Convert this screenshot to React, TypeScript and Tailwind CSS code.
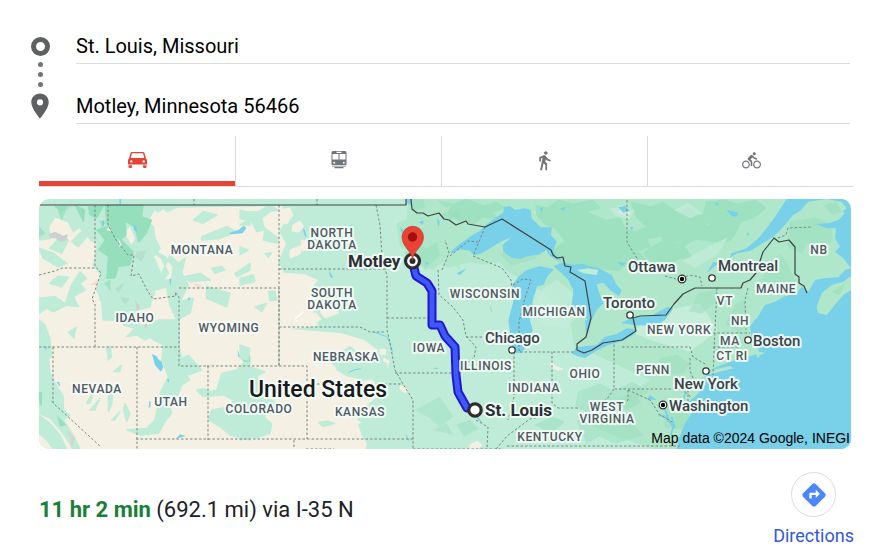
import type { ReactNode } from "react";
import { MdDirections, MdDirectionsBike, MdDirectionsWalk, MdLocationOn } from "react-icons/md";

function Region({ x, y, children }: { x: number; y: number; children: ReactNode }) {
  return (
    <g transform={`translate(${x} ${y}) scale(0.33333)`} strokeLinejoin="round">
      {children}
    </g>
  );
}

const stateLabels: [string, number, number][] = [
  ["MONTANA", 202, 254],
  ["NORTH DAKOTA", 332, 237],
  ["SOUTH DAKOTA", 332, 297],
  ["IDAHO", 135, 322],
  ["WYOMING", 229, 332],
  ["NEBRASKA", 346, 361],
  ["NEVADA", 97, 393],
  ["UTAH", 171, 406],
  ["COLORADO", 259, 413],
  ["KANSAS", 360, 416],
  ["IOWA", 429, 352],
  ["WISCONSIN", 485, 298],
  ["MICHIGAN", 554, 316],
  ["ILLINOIS", 486, 370],
  ["INDIANA", 534, 392],
  ["OHIO", 585, 378],
  ["WEST VIRGINIA", 607, 411],
  ["KENTUCKY", 550, 441],
  ["NEW YORK", 679, 334],
  ["PENN", 653, 374],
  ["VT", 725, 305],
  ["NH", 740, 325],
  ["MAINE", 776, 293],
  ["MA", 730, 345],
  ["CT RI", 732, 360],
  ["NB", 819, 254],
];

const wrappedStates = ["NORTH DAKOTA", "SOUTH DAKOTA", "WEST VIRGINIA"];

const cityLabels: [string, number, number][] = [
  ["Ottawa", 628, 272],
  ["Montreal", 718, 271],
  ["Toronto", 603, 308],
  ["Chicago", 485, 343],
  ["Boston", 753, 346],
  ["New York", 674, 389],
  ["Washington", 669, 411],
];

const GREEN = "#bfecd8";
const EAST = "#b0e7cb";
const DARK = "#96dfbd";
const SAND = "#f5f0e4";
const WATER = "#78d1e9";

function RouteMap() {
  return (
    <svg
      viewBox="39 199 812 250"
      className="mr-[3px] block h-auto rounded-[10px] font-['Roboto',sans-serif]"
      role="img"
      aria-label="Route from St. Louis to Motley"
    >
      <rect x="39" y="199" width="812" height="250" fill={GREEN} />

      {/* Eastern forests and Canada */}
      <path fill={EAST} d="M408 199H851V449H655L620 438 590 425 560 405 550 380 575 350 570 320 540 290 505 270 470 262 448 268 430 255 405 240Z" />
      <path fill={GREEN} d="M455 270L500 262 520 290 500 320 515 345 590 352 650 380 610 408 570 420 520 410 450 380Z" />
      <path fill="#c5edda" d="M652 314L700 303 718 330 690 352 650 340 632 332Z" />

      {/* Western plains */}
      <path
        fill={SAND}
        d="M39 205H60L58 216 76 222 84 236 97 240 94 262 105 280 99 300 112 312 126 299 137 303 150 292 166 288 160 270 154 256 144 245 155 240 149 220 156 208 282 206 288 218 279 231 286 244 278 262 284 273 304 274 318 280 310 290 322 300 312 314 318 326 290 329 340 333 364 340 378 350 371 360 351 351 338 361 336 370 348 377 372 380 385 390 366 406 375 418 358 424 362 436 371 449H39Z"
      />
      <g fill={SAND} stroke={SAND} strokeWidth="1" strokeLinejoin="round">
        <path d="M280 210l10-2 3 8-6 5-7-3zM293 225l7-4 4 6-5 5-7-1zM290 250l12-5-2 9-10 4zM301 240l6 1 1 9-6 1zM285 216l5 3-3 5-4-2zM304 315l12-2 5 6-10 7-8-3z" />
        <path d="M320 311l14-3 5 5-14 5zM380 349l6 1-1 5-5-1zM384 358l5 3-2 7-4-2zM401 385l7 5-3 3-5-4zM371 417l9 1-2 6-7-2zM386 417l4 3-3 4zM551 361l4 5 8 3-6 1-6-3zM470 445l7-4 5 4-3 3-9 1zM618 212l6-4 6 5-3 3z" />
      </g>

      {/* Rocky Mountains, Montana and Idaho */}
      <Region x={30} y={190}>
        <g fill={GREEN} stroke={GREEN} strokeWidth="5">
          <path d="M27 50H180L180 70 140 90 150 110 130 125 115 95 75 80 55 110 60 145 27 150Z" />
          <path d="M160 50H350L345 90 370 110 375 145 390 175 365 205 345 215 350 250 375 310 355 330 360 350 320 360 310 390H220L215 330 200 300 215 255 190 225 210 160 180 150 165 110Z" />
          <path d="M27 175L70 190 110 220 85 230 40 205ZM60 175L90 140 115 150 95 190ZM125 155L160 120 170 140 145 170ZM27 325L75 320 110 345 70 365 50 355 27 370ZM105 345L125 285 150 245 170 265 150 280 165 300 130 320 145 350ZM60 280L85 258 115 262 95 290Z" />
          <path d="M365 55L415 45 385 65ZM490 90L520 65 560 75 520 100ZM400 50L450 48 410 65ZM515 140L590 110 620 125 570 145 515 150ZM630 105L660 85V105ZM545 235L575 230 585 240 555 250ZM465 260L510 250 540 270 480 275ZM615 250L660 220V240L620 260Z" />
          <path d="M355 175L395 205 415 250 400 270 425 270 430 230 405 200ZM420 195L445 220 465 205 455 250 475 285 450 335 490 325 480 370 440 390 420 345 410 290 390 265 360 310 380 285ZM530 290L600 310 590 350 530 325ZM330 295L370 315 360 345Z" />
        </g>
        <g fill={DARK} stroke={DARK} strokeWidth="3">
          <path d="M175 50L220 48 200 85 180 75ZM225 45H340L335 80 365 90 350 130 325 158 315 110 285 95 290 135 270 150 255 120 230 100ZM200 120L240 105 275 150 310 185 300 225 265 230 255 265 230 265 235 200 205 180 225 150ZM75 50H110L95 65ZM135 45L165 60 160 95 145 65Z" />
          <path d="M225 280L240 270 240 300ZM85 60L110 50 95 90ZM27 110L45 130 27 140Z" opacity=".7" />
        </g>
        <path fill="#add8c6" opacity=".6" d="M320 185L350 180 335 215 315 200ZM255 295L285 275 265 310ZM270 320L300 325 285 345ZM90 50L130 48 110 60ZM205 90L235 95 215 110Z" />
        <path fill="#ccd0ce" d="M55 133L75 125 100 137 113 132 111 150 90 155 78 145 60 145ZM315 330L330 350 322 365Z" />
        <path fill="#f2ded3" d="M180 285L210 265 200 285ZM490 280L515 285 505 300Z" />
        <path fill={SAND} d="M290 120L300 110 315 145 305 165 290 140ZM235 110L245 125 230 120ZM265 143L275 165 268 170Z" />
        <g fill={WATER}>
          <path d="M215 95L222 90 223 105 217 110ZM310 103L318 108 323 128 312 120ZM268 27L274 28 272 45 268 40ZM595 130L625 120 640 108 648 118 635 130 605 133ZM418 268L424 265 422 290ZM472 325L481 322 478 333Z" />
        </g>
      </Region>

      {/* Sierra Nevada, Utah and Colorado */}
      <Region x={30} y={320}>
        <g fill={GREEN} stroke={GREEN} strokeWidth="4">
          <path d="M27 0L45 15 60 55 65 110 55 115 60 155 75 190 100 230 100 270 120 285 100 300 130 345 150 387H130L95 335 60 295 27 280Z" />
          <path d="M27 285L60 310 90 345 110 387H70L50 360 27 340ZM115 37L138 22 132 55ZM280 0L325 5 365 50 345 60 320 45 290 50 315 25 280 15ZM330 30L385 0H448V80L455 115 475 105 515 150 470 165 480 180 455 195 440 235 420 255 425 280 405 305 385 340 330 345 290 330 350 325 375 300 380 270 400 245 390 220 415 170 395 120 400 75 370 60Z" />
          <path d="M540 215L560 210 575 160 620 150 660 110V360L600 345 570 320 535 300 545 270 600 260 610 240 580 225 520 230 500 210 520 205ZM230 85L240 80 245 110 235 120ZM250 155L275 135 270 155ZM195 205L180 250 170 250ZM235 220L250 210 245 255 235 275ZM285 250L300 280 290 305 280 270ZM245 300L270 275 255 300ZM210 235L195 270 180 270ZM455 150L510 150 480 165Z" />
        </g>
        <path fill={DARK} d="M27 215L37 215 35 260 27 250ZM80 285L110 315 90 320ZM630 110L660 105V125L640 125Z" />
        <path fill="#d6d4cf" d="M110 330L135 355 125 387 120 355ZM338 15L350 8 355 18 345 24Z" />
        <g fill={WATER}>
          <path d="M366 103L378 107 387 120 395 125 400 142 393 155 383 145 375 135ZM80 187L88 185 90 201ZM45 82L52 80 48 92ZM411 178L418 178 415 190ZM358 243L362 245 361 260 356 265ZM438 356L450 343 467 348ZM622 88L628 105 640 115 625 110ZM63 238L68 245 65 250Z" />
        </g>
      </Region>

      {/* Plains rivers and patches */}
      <Region x={240} y={190}>
        <g fill={GREEN} stroke={GREEN} strokeWidth="4">
          <path d="M0 85L35 95 50 125 75 120 65 85 90 65 115 60 90 45 55 65 20 65 0 60ZM75 115L115 145 110 160 70 150ZM0 170L25 180 0 195ZM0 265L40 255 45 275 0 285ZM85 305L105 303 110 330 90 332ZM75 190L95 188 85 202ZM45 350L80 340 65 365Z" />
        </g>
        <path fill={EAST} d="M470 100L510 85 530 27H660V240L620 200 580 240 555 235 540 200 480 170Z" />
        <path fill={DARK} opacity=".55" d="M500 27H550L555 55 520 60ZM490 190L530 160 560 175 590 155 600 195 555 240 530 210ZM600 70L660 60V85L620 90ZM590 30L640 40 620 55Z" />
        <g fill={WATER}>
          <path d="M0 120L12 108 18 112 8 130 0 130ZM188 113L195 120 200 145 193 135ZM325 110L335 103 332 112ZM500 27H515L512 45 500 40ZM535 98L550 90 550 103ZM480 115L492 118 485 130ZM590 85L600 95 595 110ZM555 215L568 218 560 225ZM265 225L270 245 280 265 270 260Z" />
        </g>
        <path stroke="#fff" strokeWidth="5" d="M165 387L190 365" />
      </Region>
      <Region x={240} y={320}>
        <g fill={GREEN} stroke={GREEN} strokeWidth="4">
          <path d="M0 145L25 140 75 155 50 170 70 190 50 205 70 230 105 245 110 270 80 260 75 295 95 310 90 340 45 355 20 320 20 280 0 250ZM0 290L30 300 45 350 0 360ZM235 308L260 303 285 310 250 320ZM355 280L410 270 450 290 440 387H380L385 345 365 345 375 310 355 300ZM265 120L330 80 370 110 440 130 440 165 370 180 310 160ZM0 75L30 85 25 120 0 115Z" />
        </g>
        <path fill={DARK} opacity=".4" d="M525 270L600 230 640 290 600 320 570 295ZM580 330L620 310 640 345Z" />
        <path fill="none" stroke={WATER} strokeWidth="3" d="M325 157L342 150 362 146M400 35L440 50 450 70 457 95M582 145L593 145M498 345L507 362" />
      </Region>

      {/* Woodland texture across Ontario and Quebec */}
      <g fill={DARK} stroke={DARK} strokeWidth="1" strokeLinejoin="round" opacity=".7">
        <path d="M452 205l14-6 18 7 12-4 10 6-15 5 12 7-20-3-9 7-16-4-10-8zM536 205l12 3 10-8 15 4 20-4 8 8-15 4 20 8 14-2 6 12 18 3 6 14-12 4 8 9-17 2-10 9-22-3-20 1-18-5-6-14 12-9-9-12-10-4-9-9z" />
        <path d="M631 202l20 5 12-5 14 10 12-5 10 9 12-2 4 8-12 3 17 8-6 9-18-3-12 7-7-5-10 5-6-10-14 3-9-9 9-3-10-9zM706 202l18-2 14 4 18-4 10 8-12 10-12 3-10 18-14 6-6-10-14 4 4-12 12-3-11-8zM652 247l14-8 18 7 8 11-14 2-12 9-15-6-8-9z" />
        <path d="M758 290l11-28 12-7 6 9 10 22-12 4zM660 359l17-4 12 9-6 9-27 2zM578 392l22-8 15 7 17-9 16 10-22 14-18-4-18 10-14-4zM577 421l24-7 14 13 16-4 12 12-27 8-17-7-12 7zM790 222l22-6 18 8 3 16-10 8-16-5-5 10-14-6zM698 294l15-3 4 10-15 12-12-2zM500 254l20-2 17 6-26 7zM726 324l10-20 8-3 4 22-8 10z" opacity=".65" />
        <path d="M665 405l18 2 8 12-8 10-18-2zM615 399l17-6 9 9-14 8zM535 425l18-8 11 5-12 11zM457 425l13-5 8 9-14 7z" opacity=".7" />
      </g>
      <path fill="#c5edda" opacity=".7" d="M610 209l12-4 13 6-6 8-14-3zM674 210l14-7 14 10-12 5zM682 261l32-17 14-7-10 17-23 14zM543 288l14-8 16 13 3 25-11 10-23-3-6-20z" />

      {/* Great Lakes */}
      <Region x={450} y={190}>
        <g fill={WATER}>
          <path d="M0 187L25 165 60 140 90 122 107 105 130 88 160 68 163 50 180 48 195 60 225 55 242 60 245 85 272 112 305 112 303 135 320 155 310 180 318 200 340 210 322 210 300 198 288 180 265 195 235 198 210 207 185 203 160 185 158 165 182 143 158 152 125 172 95 190 73 196 60 182 30 178 5 190Z" />
          <path d="M187 285L205 260 230 240 270 228 312 238 293 258 280 285 262 288 250 325 245 355 240 390H175L190 335Z" />
          <path d="M310 228L340 218 370 224 395 221 450 236 485 255 500 285 515 300 507 318 480 300 460 278 440 283 448 310 460 340 440 360 425 390 415 390 390 375 365 345 370 300 355 270 335 250Z" />
          <path d="M505 52L525 48 540 62 520 68ZM500 215L530 220 515 228ZM330 55L350 50 340 62ZM270 55L280 52 276 68ZM20 250L50 235 30 255ZM120 345L128 370 122 360ZM540 110L550 112 545 122Z" />
        </g>
        <path fill={GREEN} d="M380 240L415 235 445 240 440 255 400 250ZM250 65L258 62 254 75Z" />
      </Region>
      <Region x={450} y={320}>
        <path fill={WATER} d="M175 0H240L248 30 237 70 215 98 198 99 185 75ZM405 0H425L415 35 408 45ZM365 100L380 82 410 78 440 75 465 50 500 42 530 25 560 28 550 45 520 62 475 75 440 92 405 114 380 108ZM590 238L600 225 620 240ZM50 258L58 265 100 310 90 305Z" />
      </Region>
      <path fill={WATER} d="M621 323L631 318 650 316 668 307 673 309 665 320 655 326 633 325Z" />

      {/* Atlantic, Gulf of St. Lawrence and Nova Scotia */}
      <Region x={650} y={190}>
        <g fill={WATER}>
          <path d="M410 27H603V235L580 205 555 185 570 170 555 145 558 115 530 115 495 102 535 100 565 90 585 70 550 45 500 38 465 55 430 75 400 110 370 140 330 165 300 183 260 190 240 203 245 190 290 175 325 145 350 115 375 80Z" />
          <path d="M603 235L585 240 565 262 520 265 495 270 475 305 455 290 440 310 400 320 375 335 345 345 330 370 318 390H603Z" />
          <path d="M230 60L245 62 265 68 260 80 245 78ZM195 35L205 42 200 48ZM380 100L388 92 385 105ZM190 215L205 220 170 250ZM196 300L200 300 200 340ZM290 130L298 128 292 140Z" />
        </g>
        <path fill={EAST} d="M603 258L580 275 545 285 515 310 500 350 505 370 530 375 550 350 580 315 603 300Z" />
        <path fill={EAST} d="M475 35L530 27 575 35 590 55 560 75 530 90 500 80 450 90 440 75Z" />
        <path fill={DARK} opacity=".6" d="M520 45L560 35 575 65 545 75ZM545 305L585 280 570 315Z" />
      </Region>
      <Region x={650} y={320}>
        <path fill={WATER} d="M316 -3L300 20 305 50 315 78 328 95 312 105 290 110 250 122 200 140 175 155 163 175 165 195 135 230 115 245 115 260 128 275 105 310 85 360 80 390H610V-3Z" />
        <path fill={EAST} d="M185 150L240 138 250 145 210 155 175 164ZM308 80L325 85 325 95 345 98 325 108 310 100ZM320 108L330 108 325 113Z" />
        <path fill="none" stroke={WATER} strokeWidth="5" d="M95 265L105 220 100 205M25 285L48 290 70 320 62 345M40 255L60 310M65 290L75 325" />
        <path fill={WATER} d="M0 0H30L15 8 0 12Z" />
      </Region>

      {/* State borders */}
      <g fill="none" stroke="#788781" strokeWidth="1" strokeDasharray="2.5 2">
        <path d="M95 205V266L101 273 92 299 95 304V347M39 275L55 271 62 268H96M108 205V225L116 240 128 255 134 255 131 276 139 274 147 290 153 299 176 296 175 292 179 297V366H208V440M137 347V449M39 347H179M53 347V403L101 447M179 288H279V366M136 439H413M279 205V366M207 366H307V439M279 269H385M279 327H360L370 332 385 332M308 384H403M376 205L380 225 382 255 387 276 387 320 387 330 390 343 395 370 403 384 413 400V449M395 373H459M387 318H435M413 449H502M294 440V449M306 449H334M194 199V205M317 199V205" />
        <path d="M485 227L473 256 502 268 511 280 513 298M450 256L468 241 478 242M442 270L449 253 445 240M438 270L439 295 452 306 463 320 466 336 476 347 474 358 465 364M466 337H484M513 285L523 279 531 280 525 298 519 322 519 352M514 352V397L508 420M520 352H552V403L558 408 579 408M553 352H574M614 340V389H682L692 398M614 389L607 399 590 410M622 347H690L693 357 707 365M717 288L715 330 713 375M748 288L745 300 746 330M730 346L718 347M713 347H740M713 333H750M690 358L690 371 694 380M628 390V400L613 414 600 420M628 390L650 400 660 415 674 423M688 390V411M496 449L507 436 530 419 544 416M507 446H680M476 420L488 427 487 449M627 200V242L638 260M665 276L680 280 689 275 700 277 702 286M778 238L786 235 788 228 812 227" />
      </g>

      {/* National borders */}
      <g fill="none" stroke="#3d4245" strokeWidth="1.2" strokeLinejoin="round">
        <path d="M39 205H406V199M411 199L412 209 417 213 423 213 428 216 439 213 444 219 449 220 456 225 466 221 468 224 485 227 502 219 551 250 553 255 557 258 563 257 565 266 571 267 570 272 585 281 589 305 591 318 586 337 577 344 577 350 584 353 592 350 603 343 622 340 636 331 633 318 640 316 666 315 674 304 683 294 695 288H741L743 283 750 280 756 273 763 252 774 238 779 242 789 240 795 247 795 274 799 277 799 283 804 286 807 293" />
      </g>

      {/* Driving route */}
      <g fill="none" strokeLinejoin="round" strokeLinecap="round">
        <path stroke="#2415c8" strokeWidth="9" d="M414 268L416 276 427 283 432 291V325L440 325 445 336 455 347 456 375 458 392 467 408" />
        <path stroke="#3d58fb" strokeWidth="5" d="M414 268L416 276 427 283 432 291V325L440 325 445 336 455 347 456 375 458 392 467 408" />
      </g>

      {/* Labels */}
      <g stroke="#f4fcf8" strokeOpacity=".9" strokeLinejoin="round" style={{ paintOrder: "stroke" }}>
        <g fill="#52585f" strokeWidth="4" textAnchor="middle" className="text-[12px] font-medium tracking-wider">
          {stateLabels.map(([name, x, y]) =>
            wrappedStates.includes(name) ? (
              <text key={name} x={x} y={y}>
                {name.split(" ").map((word, line) => (
                  <tspan key={word} x={x} dy={line * 12}>{word}</tspan>
                ))}
              </text>
            ) : (
              <text key={name} x={x} y={y}>{name}</text>
            ),
          )}
        </g>
        <g fill="#3c4148" strokeWidth="4" className="text-[15px] font-medium">
          {cityLabels.map(([name, x, y]) => (
            <text key={name} x={x} y={y}>{name}</text>
          ))}
        </g>
        <g fill="#2b2e33" strokeWidth="4" className="text-[17px] font-bold">
          <text x="348" y="267">Motley</text>
          <text x="485" y="416">St. Louis</text>
        </g>
        <text x="249" y="397" fill="#17191c" strokeWidth="4" className="text-[23px] font-medium">United States</text>
      </g>
      <g fill="#fff" stroke="#333" strokeWidth="1.3">
        <circle cx="712" cy="278" r="3.2" />
        <circle cx="630" cy="315" r="3.2" />
        <circle cx="512" cy="350" r="3.2" />
        <circle cx="748" cy="340" r="3.2" />
        <circle cx="706" cy="371" r="3.2" />
        <circle cx="682" cy="279" r="3.8" />
        <circle cx="663" cy="405" r="3.8" />
      </g>
      <circle cx="682" cy="279" r="2.2" />
      <circle cx="663" cy="405" r="2.2" />

      {/* Route endpoints */}
      <g fill="#fff" stroke="#2d2d2f" strokeWidth="3.2">
        <circle cx="475" cy="410" r="6.2" />
        <circle cx="412.500" cy="261" r="7" />
      </g>
      <circle cx="412.500" cy="261" r="3" fill="#2d2d2f" />
      <path fill="#e94335" stroke="#c5352a" strokeWidth=".6" d="M412.500 260C411.500 250 402 247 402 237A10.700 10.700 0 0 1 423.500 237C423.500 247 413.500 250 412.500 260Z" />
      <circle cx="412.500" cy="237" r="4.700" fill="#a50e0e" />

      <text x="850" y="443" textAnchor="end" className="fill-black font-['Liberation_Sans',sans-serif] text-[14px]">
        Map data ©2024 Google, INEGI
      </text>
    </svg>
  );
}

function CarIcon() {
  return (
    <svg viewBox="0 0 19 16" className="h-4 w-[19px]" fill="currentColor" fillRule="evenodd" aria-hidden="true">
      <path d="M4 0H15Q16.200 0 16.500 1L18 6.500Q19 7.500 19 8.500V12.500H0V8.500Q0 7.500 1 6.500L2.500 1Q2.800 0 4 0ZM4 1.300L2.700 6H16.300L15 1.300ZM3.300 8.200A1.200 1.200 0 1 0 3.300 10.600 1.200 1.200 0 1 0 3.300 8.200ZM15.700 8.200A1.200 1.200 0 1 0 15.700 10.600 1.200 1.200 0 1 0 15.700 8.200ZM0.500 13.200H4V15Q4 16 3 16H1.500Q.500 16 .500 15ZM15 13.200H18.500V15Q18.500 16 17.500 16H16Q15 16 15 15Z" />
    </svg>
  );
}

function TransitIcon() {
  return (
    <svg viewBox="0 0 16 18" className="h-[18px] w-4" fill="currentColor" fillRule="evenodd" aria-hidden="true">
      <path d="M2 0H14Q15.500 0 15.500 2V14H.500V2Q.500 0 2 0ZM5.500 .800V2H10.500V.800ZM1.500 3V8.500H7.500V3ZM8.500 3V8.500H14.500V3ZM3.200 10.800A1 1 0 1 0 3.200 12.800 1 1 0 1 0 3.200 10.800ZM12.800 10.800A1 1 0 1 0 12.800 12.800 1 1 0 1 0 12.800 10.800ZM1 14.800H15V15.600H1ZM3.500 16H12.500V17.300H3.500Z" />
    </svg>
  );
}

const inputClass =
  "h-9 w-full border-b border-[#dadce0] bg-transparent text-[20px] leading-7 text-black outline-none";
const tabClass = "flex h-[51px] items-center justify-center border-b border-[#dadce0] pb-0.5 text-[#70757a]";

export default function App() {
  return (
    <main className="bg-white pt-7 pr-[15px] pl-[39px] font-['Roboto',sans-serif]">
      <form className="-ml-[9px] flex pr-1">
        <div className="flex w-[46px] shrink-0 flex-col pt-[9px]" aria-hidden="true">
          <span className="ml-px size-[19px] rounded-full border-[5px] border-[#5f6061]" />
          <div className="flex w-[21px] flex-col items-center gap-[5px] py-[6px]">
            <span className="size-[5px] rounded-full bg-[#70757a]" />
            <span className="size-[5px] rounded-full bg-[#70757a]" />
            <span className="size-[5px] rounded-full bg-[#70757a]" />
          </div>
          <MdLocationOn className="-mt-0.5 -ml-[5px] size-[30px] text-[#5f6061]" />
        </div>
        <div className="flex grow flex-col gap-6">
          <input className={inputClass} aria-label="Starting point" defaultValue="St. Louis, Missouri" />
          <input className={inputClass} aria-label="Destination" defaultValue="Motley, Minnesota 56466" />
        </div>
      </form>

      <div className="mt-3 grid grid-cols-[197px_1fr_1fr_1fr]" role="tablist" aria-label="Travel mode">
        <button type="button" role="tab" aria-selected="true" aria-label="Driving" className="relative flex h-[51px] items-center justify-center border-r border-b border-[#dadce0] pb-0.5 text-[#e54335]">
          <CarIcon />
          <span className="absolute inset-x-0 bottom-0 h-[5px] bg-[#e54335]" />
        </button>
        <button type="button" role="tab" aria-selected="false" aria-label="Transit" className={`${tabClass} border-r`}>
          <TransitIcon />
        </button>
        <button type="button" role="tab" aria-selected="false" aria-label="Walking" className={`${tabClass} border-r`}>
          <MdDirectionsWalk className="size-[21px]" />
        </button>
        <button type="button" role="tab" aria-selected="false" aria-label="Cycling" className={tabClass}>
          <MdDirectionsBike className="size-[19px]" />
        </button>
      </div>

      <div className="mt-3">
        <RouteMap />
      </div>

      <div className="mt-[23px] flex items-start justify-between">
        <p className="pt-[22px] text-[22px] leading-8 text-[#202124]">
          <strong className="font-bold text-[#188038]">11 hr 2 min</strong> (692.1 mi) via I-35 N
        </p>
        <a href="#directions" className="flex flex-col items-center text-[18px] leading-6 text-[#3358d4]">
          <span className="mb-[7px] flex size-[45px] items-center justify-center rounded-full border border-[#dadce0]">
            <MdDirections className="size-7 text-[#4c86f9]" />
          </span>
          Directions
        </a>
      </div>
    </main>
  );
}
